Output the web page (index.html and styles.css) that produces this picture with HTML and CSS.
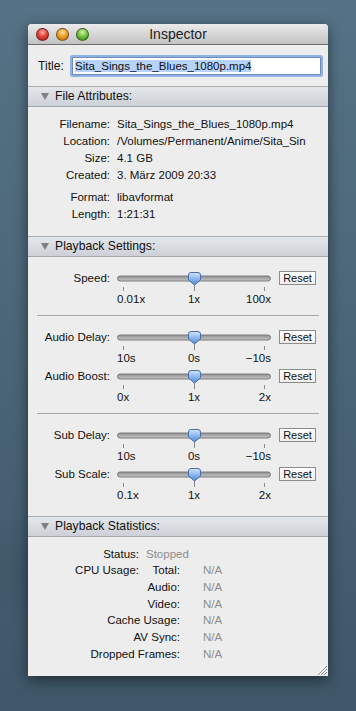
FILE: index.html
```html
<!DOCTYPE html>
<html lang="en">
<head>
    <meta charset="UTF-8">
    <meta name="viewport" content="width=device-width, initial-scale=1.0">
    <title>Inspector</title>
    <link rel="stylesheet" href="styles.css">
</head>
<body>
    <div class="window">
        <!-- Title bar -->
        <div class="titlebar">
            <div class="lights">
                <span class="light red"></span>
                <span class="light orange"></span>
                <span class="light green"></span>
            </div>
            <div class="wtitle">Inspector</div>
        </div>

        <div class="title-row">
            <label class="title-label">Title:</label>
            <div class="field"><span class="sel">Sita_Sings_the_Blues_1080p.mp4</span></div>
        </div>

        <!-- File Attributes -->
        <div class="header"><span class="tri"></span>File Attributes:</div>
        <div class="attrs">
            <span class="k">Filename:</span><span class="v">Sita_Sings_the_Blues_1080p.mp4</span>
            <span class="k">Location:</span><span class="v">/Volumes/Permanent/Anime/Sita_Sin</span>
            <span class="k">Size:</span><span class="v">4.1 GB</span>
            <span class="k">Created:</span><span class="v">3. März 2009 20:33</span>
            <span class="k gap">Format:</span><span class="v gap">libavformat</span>
            <span class="k">Length:</span><span class="v">1:21:31</span>
        </div>

        <!-- Playback Settings -->
        <div class="header"><span class="tri"></span>Playback Settings:</div>
        <div class="settings">
            <div class="group">
                <div class="slider">
                    <span class="s-label">Speed:</span>
                    <svg class="track" width="154" height="23"><use href="#slider"/></svg>
                    <button class="reset">Reset</button>
                    <div class="scale"><span>0.01x</span><span>1x</span><span>100x</span></div>
                </div>
            </div>
            <div class="sep"></div>
            <div class="group">
                <div class="slider">
                    <span class="s-label">Audio Delay:</span>
                    <svg class="track" width="154" height="23"><use href="#slider"/></svg>
                    <button class="reset">Reset</button>
                    <div class="scale"><span>10s</span><span>0s</span><span>−10s</span></div>
                </div>
                <div class="slider">
                    <span class="s-label">Audio Boost:</span>
                    <svg class="track" width="154" height="23"><use href="#slider"/></svg>
                    <button class="reset">Reset</button>
                    <div class="scale"><span>0x</span><span>1x</span><span>2x</span></div>
                </div>
            </div>
            <div class="sep"></div>
            <div class="group">
                <div class="slider">
                    <span class="s-label">Sub Delay:</span>
                    <svg class="track" width="154" height="23"><use href="#slider"/></svg>
                    <button class="reset">Reset</button>
                    <div class="scale"><span>10s</span><span>0s</span><span>−10s</span></div>
                </div>
                <div class="slider">
                    <span class="s-label">Sub Scale:</span>
                    <svg class="track" width="154" height="23"><use href="#slider"/></svg>
                    <button class="reset">Reset</button>
                    <div class="scale"><span>0.1x</span><span>1x</span><span>2x</span></div>
                </div>
            </div>
        </div>

        <!-- Playback Statistics -->
        <div class="header"><span class="tri"></span>Playback Statistics:</div>
        <div class="stats">
            <span class="k1">Status:</span><span class="val wide">Stopped</span>
            <span class="k1">CPU Usage:</span><span class="k2">Total:</span><span class="val">N/A</span>
            <span class="k12">Audio:</span><span class="val">N/A</span>
            <span class="k12">Video:</span><span class="val">N/A</span>
            <span class="k12">Cache Usage:</span><span class="val">N/A</span>
            <span class="k12">AV Sync:</span><span class="val">N/A</span>
            <span class="k12">Dropped Frames:</span><span class="val">N/A</span>
        </div>

        <svg class="grip" width="12" height="12">
            <path d="M11 2 L2 11 M11 5 L5 11 M11 8 L8 11" stroke="#8a8a8a" stroke-width="1"/>
            <path d="M11 3 L3 11 M11 6 L6 11 M11 9 L9 11" stroke="#fff" stroke-width="1"/>
        </svg>
    </div>

    <!-- shared slider drawing -->
    <svg width="0" height="0" class="defs">
        <defs>
            <linearGradient id="trk" x1="0" y1="0" x2="0" y2="1">
                <stop offset="0" stop-color="#8e8e8e"/>
                <stop offset="1" stop-color="#c8c8c8"/>
            </linearGradient>
            <linearGradient id="knb" x1="0" y1="0" x2="0" y2="1">
                <stop offset="0" stop-color="#d3e4fa"/>
                <stop offset="0.5" stop-color="#8db7ee"/>
                <stop offset="1" stop-color="#4f88d6"/>
            </linearGradient>
            <g id="slider">
                <rect x="0.5" y="6" width="153" height="5" rx="2.5" fill="url(#trk)" stroke="#7a7a7a" stroke-width="1"/>
                <path d="M6.5 17 V21 M147.5 17 V21 M77.5 15 V21" stroke="#888" stroke-width="1"/>
                <path d="M71.5 5 Q71.5 2.5 74 2.5 L81 2.5 Q83.5 2.5 83.5 5 L83.5 10 L77.5 15 L71.5 10 Z" fill="url(#knb)" stroke="#4a6ea5" stroke-width="1"/>
            </g>
        </defs>
    </svg>
</body>
</html>
```

FILE: styles.css
```css
body {
    margin: 0;
    width: 356px;
    height: 711px;
    overflow: hidden;
    font-family: "Liberation Sans", Arial, sans-serif;
    font-size: 11.5px;
    color: #111;
    background-color: #4a6577;
    background-image:
        radial-gradient(circle at 20% 30%, rgba(255,255,255,0.06) 0, transparent 40px),
        radial-gradient(circle at 80% 10%, rgba(255,255,255,0.05) 0, transparent 50px),
        radial-gradient(circle at 10% 80%, rgba(0,0,0,0.08) 0, transparent 60px),
        linear-gradient(#557386, #3f5768);
    padding-top: 24px;
    box-sizing: border-box;
}
.defs {
    position: absolute;
}
.window {
    position: relative;
    margin-left: 28px;
    width: 300px;
    height: 652px;
    background: #ededed;
    border-radius: 4px 4px 0 0;
    box-shadow: 0 4px 14px rgba(0,0,0,0.5);
    overflow: hidden;
}
.titlebar {
    height: 20px;
    border-bottom: 1px solid #6e6e6e;
    background: linear-gradient(#ebebeb, #c2c2c2);
    display: flex;
    align-items: center;
    position: relative;
}
.lights {
    display: flex;
    gap: 7px;
    margin-left: 8px;
}
.light {
    width: 13px;
    height: 13px;
    border-radius: 50%;
    box-sizing: border-box;
    border: 1px solid rgba(0,0,0,0.45);
}
.red {
    background: radial-gradient(circle at 50% 30%, #ffb0a8 0, #e4463c 45%, #a8140e 100%);
}
.orange {
    background: radial-gradient(circle at 50% 30%, #ffe3a8 0, #f0a22c 45%, #b46008 100%);
}
.green {
    background: radial-gradient(circle at 50% 30%, #d4f5a8 0, #78c444 45%, #2f7a10 100%);
}
.wtitle {
    position: absolute;
    left: 0;
    right: 0;
    text-align: center;
    font-size: 14px;
    color: #222;
    pointer-events: none;
}
.title-row {
    height: 41px;
    display: flex;
    align-items: center;
}
.title-label {
    width: 36px;
    text-align: right;
    font-size: 12.2px;
}
.field {
    margin-left: 8px;
    width: 245px;
    height: 16px;
    line-height: 16px;
    padding-left: 2px;
    background: #fff;
    border: 1px solid #6f8cba;
    box-shadow: 0 0 0 2px #8db3e6;
    border-radius: 1px;
    font-size: 11.5px;
    white-space: nowrap;
    overflow: hidden;
}
.sel {
    background: #b5d3fb;
}
.header {
    height: 19px;
    line-height: 19px;
    border-top: 1px solid #acacac;
    border-bottom: 1px solid #a2a6ac;
    background: linear-gradient(#e4e7eb, #cdd1d7);
    font-size: 12.2px;
    display: flex;
    align-items: center;
}
.tri {
    width: 0;
    height: 0;
    margin-left: 13px;
    margin-right: 6px;
    border-left: 4px solid transparent;
    border-right: 4px solid transparent;
    border-top: 7px solid #808080;
}
.attrs {
    display: grid;
    grid-template-columns: 82px 1fr;
    column-gap: 7px;
    padding: 9px 0 13px;
    line-height: 17px;
}
.attrs .k {
    text-align: right;
}
.attrs .v {
    white-space: nowrap;
}
.attrs .gap {
    margin-top: 5px;
}
.settings {
    padding: 13px 0 15px;
}
.group {
    display: flex;
    flex-direction: column;
    gap: 4px;
}
.sep {
    margin: 10px 9px 13px;
    height: 1px;
    background: #a6a6a6;
}
.slider {
    display: grid;
    grid-template-columns: 89px 154px 45px;
    grid-template-rows: 23px 12px;
}
.s-label {
    text-align: right;
    padding-right: 7px;
    line-height: 17px;
}
.track {
    display: block;
}
.reset {
    margin: 1px 0 0 8px;
    padding: 0;
    height: 14px;
    width: 37px;
    border: 1px solid #8c8c8c;
    border-radius: 0;
    background: linear-gradient(#ffffff, #eeeeee);
    font-family: "Liberation Sans", Arial, sans-serif;
    font-size: 11px;
    line-height: 12px;
    color: #111;
}
.scale {
    grid-column: 2;
    display: grid;
    grid-template-columns: 1fr auto 1fr;
    line-height: 12px;
}
.scale span:first-child {
    text-align: left;
}
.scale span:last-child {
    text-align: right;
}
.stats {
    display: grid;
    grid-template-columns: 118px 34px 1fr;
    padding-top: 8.5px;
    line-height: 16.7px;
}
.k1 {
    text-align: right;
    padding-right: 7px;
}
.k2 {
    text-align: right;
}
.k12 {
    grid-column: 1 / 3;
    text-align: right;
}
.val {
    color: #8c8c8c;
    padding-left: 23px;
}
.val.wide {
    grid-column: 2 / 4;
    padding-left: 0;
}
.grip {
    position: absolute;
    right: 0;
    bottom: 0;
}
```
